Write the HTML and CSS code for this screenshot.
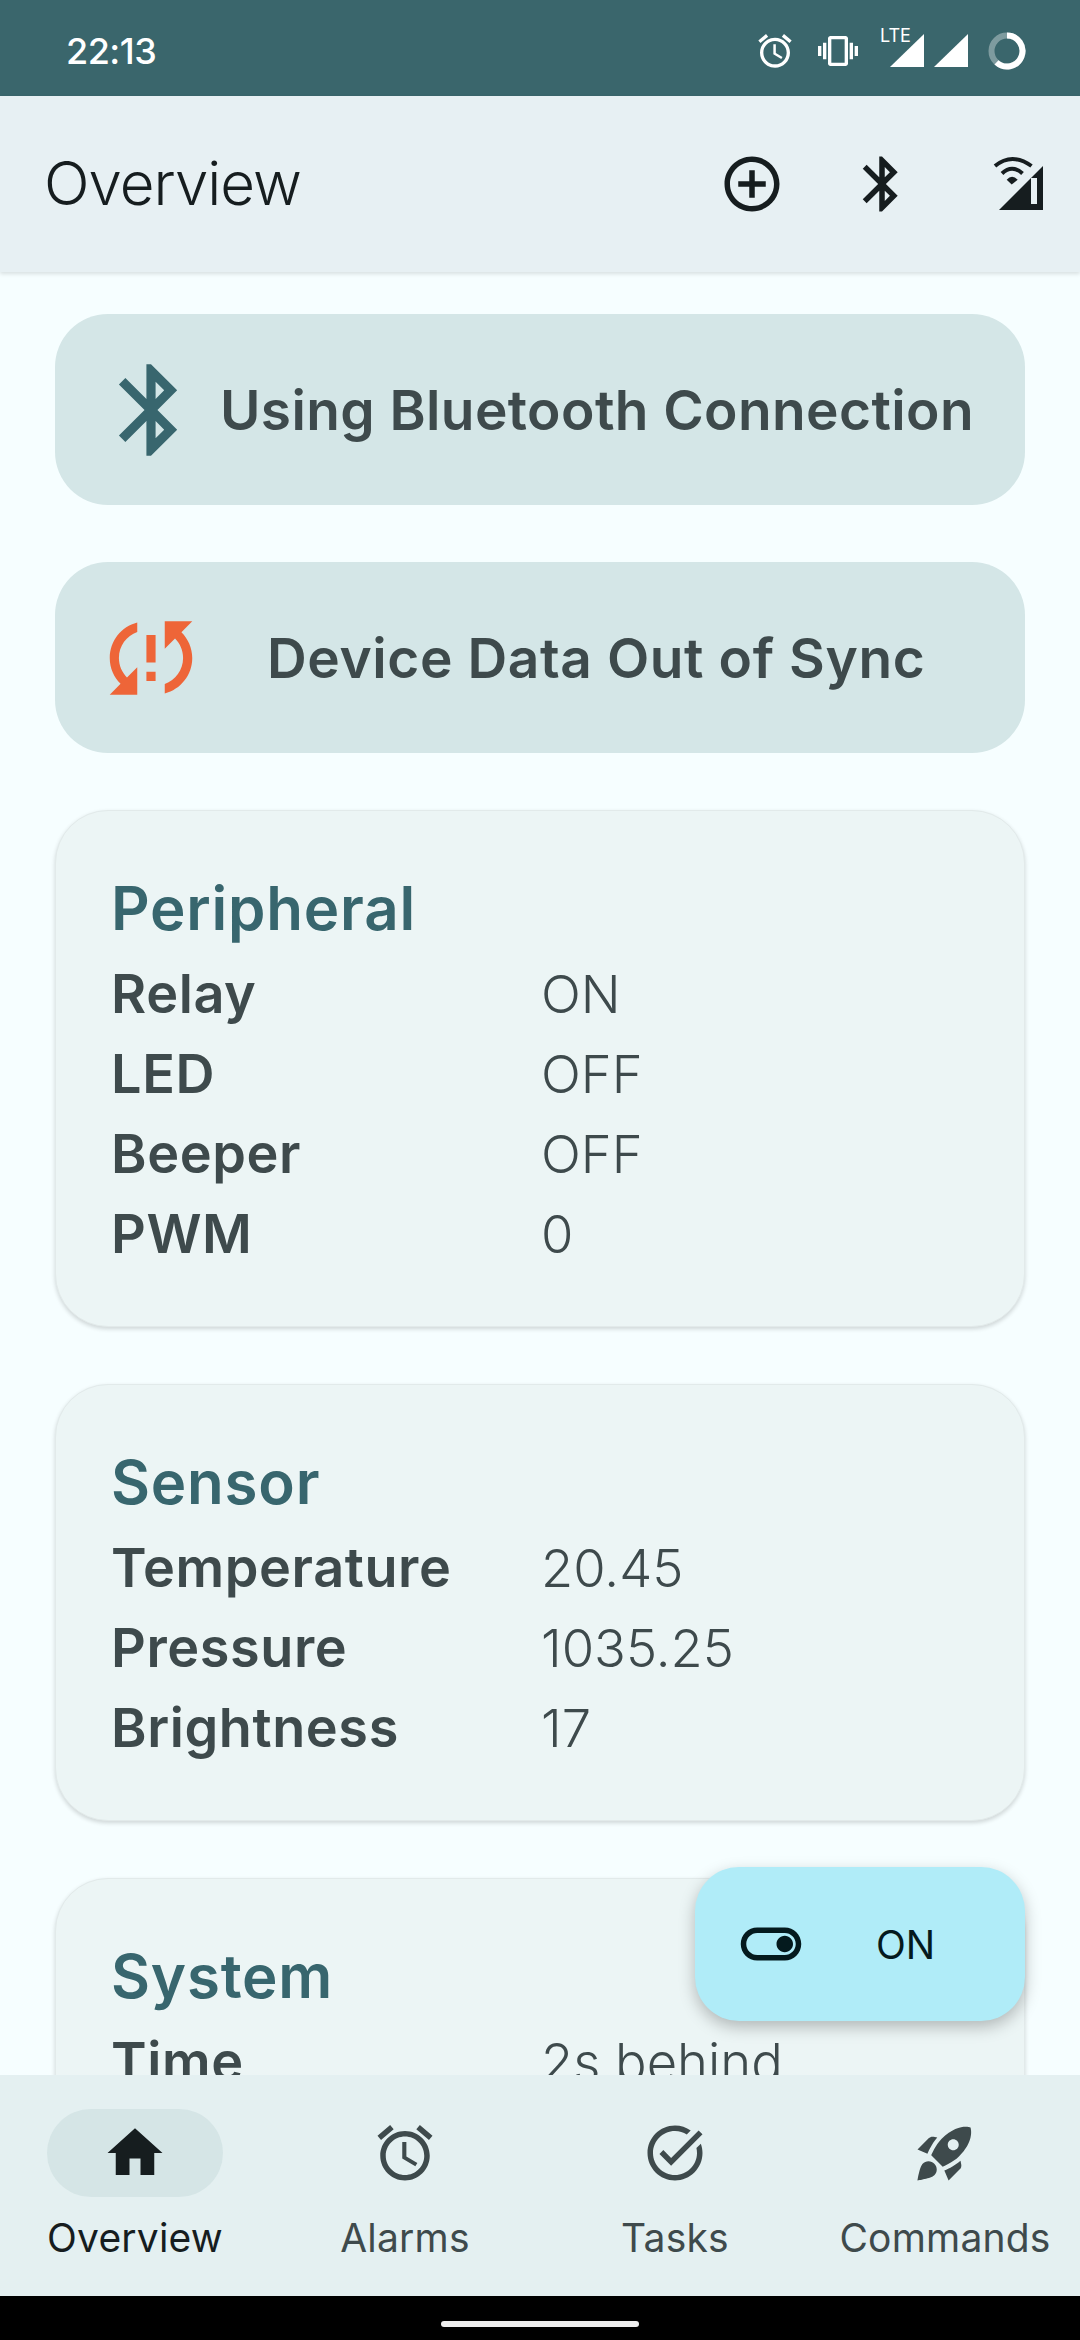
FILE: index.html

```html
<!DOCTYPE html>
<html lang="en">
<head>
    <meta charset="UTF-8">
    <meta name="viewport" content="width=device-width, initial-scale=1.0">
    <title>Overview</title>
    <link rel="stylesheet" href="styles.css">
</head>
<body>
    <div class="app">
        <div class="status-bar">
            <span class="clock">22:13</span>
            <div class="status-icons">
                <svg class="st-alarm" viewBox="0 0 24 24"><path d="M22 5.72l-4.6-3.86-1.29 1.53 4.6 3.86L22 5.72zM7.88 3.39L6.6 1.86 2 5.71l1.29 1.53 4.59-3.85zM12.5 8H11v6l4.75 2.85.75-1.23-4-2.37V8zM12 4c-4.97 0-9 4.03-9 9s4.03 9 9 9 9-4.03 9-9-4.03-9-9-9zm0 16c-3.87 0-7-3.13-7-7s3.13-7 7-7 7 3.13 7 7-3.13 7-7 7z"/></svg>
                <svg class="st-vibrate" viewBox="0 0 24 24"><path d="M0 15h2V9H0v6zm3 2h2V7H3v10zm19-8v6h2V9h-2zm-3 8h2V7h-2v10zM16.5 3h-9C6.67 3 6 3.67 6 4.5v15c0 .83.67 1.5 1.5 1.5h9c.83 0 1.5-.67 1.5-1.5v-15c0-.83-.67-1.5-1.5-1.5zM16 19H8V5h8v14z"/></svg>
                <div class="st-signal">
                    <span class="lte">LTE</span>
                    <svg class="st-tri" viewBox="0 0 34 33"><path d="M34 0v33H0z"/></svg>
                </div>
                <svg class="st-tri st-tri-2" viewBox="0 0 34 33"><path d="M34 0v33H0z"/></svg>
                <svg class="st-ring" viewBox="0 0 38 38">
                    <circle cx="19" cy="19" r="15.5" class="ring-dim"/>
                    <path d="M19 3.5A15.500 15.500 0 1 1 8.500 30.400" class="ring-on"/>
                </svg>
            </div>
        </div>

        <header class="app-bar">
            <h1>Overview</h1>
            <div class="bar-actions">
                <svg class="icon" viewBox="0 0 24 24"><path d="M13 7h-2v4H7v2h4v4h2v-4h4v-2h-4V7zm-1-5C6.48 2 2 6.48 2 12s4.48 10 10 10 10-4.48 10-10S17.520 2 12 2zm0 18c-4.410 0-8-3.590-8-8s3.590-8 8-8 8 3.590 8 8-3.590 8-8 8z"/></svg>
                <svg class="icon" viewBox="0 0 24 24"><path d="M17.71 7.71L12 2h-1v7.590L6.410 5 5 6.410 10.590 12 5 17.590 6.410 19 11 14.410V22h1l5.710-5.710-4.300-4.290 4.300-4.290zM13 5.830l1.880 1.880L13 9.590V5.830zm1.880 10.460L13 18.170v-3.760l1.880 1.880z"/></svg>
                <svg class="icon-net" viewBox="0 0 56 58">
                    <path d="M52 11v44H8z"/>
                    <path class="net-slot" d="M40 23h6v26h-6z"/>
                    <path class="net-arc" d="M4 11Q21-3 40.500 11"/>
                    <path class="net-arc" d="M11 18.500Q21 9 31.500 18.500"/>
                    <path d="M15.700 24.700Q21 19 26.700 24.700L20.700 29.500z"/>
                </svg>
            </div>
        </header>

        <main class="content">
            <div class="banner banner-bt">
                <svg class="banner-icon" viewBox="0 0 24 24"><path d="M17.71 7.71L12 2h-1v7.590L6.410 5 5 6.410 10.590 12 5 17.590 6.410 19 11 14.410V22h1l5.710-5.710-4.300-4.290 4.300-4.290zM13 5.830l1.880 1.880L13 9.590V5.830zm1.880 10.460L13 18.170v-3.760l1.880 1.880z"/></svg>
                <span>Using Bluetooth Connection</span>
            </div>
            <div class="banner banner-sync">
                <svg class="banner-icon" viewBox="0 0 24 24"><path d="M3 12c0 2.210.91 4.200 2.360 5.640L3 20h6v-6l-2.240 2.240C5.680 15.150 5 13.660 5 12c0-2.610 1.670-4.830 4-5.650V4.260C5.550 5.150 3 8.270 3 12zm8 5h2v-2h-2v2zM21 4h-6v6l2.240-2.240C18.320 8.850 19 10.340 19 12c0 2.610-1.670 4.830-4 5.650v2.090c3.450-.89 6-4.010 6-7.740 0-2.210-.91-4.200-2.360-5.640L21 4zm-10 9h2V7h-2v6z"/></svg>
                <span>Device Data Out of Sync</span>
            </div>

            <section class="card">
                <h2>Peripheral</h2>
                <div class="row"><b>Relay</b><span>ON</span></div>
                <div class="row"><b>LED</b><span>OFF</span></div>
                <div class="row"><b>Beeper</b><span>OFF</span></div>
                <div class="row"><b>PWM</b><span>0</span></div>
            </section>

            <section class="card">
                <h2>Sensor</h2>
                <div class="row"><b>Temperature</b><span>20.45</span></div>
                <div class="row"><b>Pressure</b><span>1035.25</span></div>
                <div class="row"><b>Brightness</b><span>17</span></div>
            </section>

            <section class="card">
                <h2>System</h2>
                <div class="row"><b>Time</b><span>2s behind</span></div>
            </section>

            <div class="fab">
                <svg class="fab-icon" viewBox="0 0 24 24"><path d="M17 6H7c-3.310 0-6 2.690-6 6s2.690 6 6 6h10c3.310 0 6-2.690 6-6s-2.690-6-6-6zm0 10H7c-2.210 0-4-1.790-4-4s1.790-4 4-4h10c2.210 0 4 1.790 4 4s-1.790 4-4 4zm0-7c-1.660 0-3 1.340-3 3s1.340 3 3 3 3-1.340 3-3-1.340-3-3-3z"/></svg>
                <span>ON</span>
            </div>
        </main>

        <nav class="bottom-nav">
            <div class="nav-item active">
                <div class="pill"><svg class="icon" viewBox="0 0 24 24"><path d="M10 20v-6h4v6h5v-8h3L12 3 2 12h3v8z"/></svg></div>
                <span>Overview</span>
            </div>
            <div class="nav-item">
                <div class="pill"><svg class="icon" viewBox="0 0 24 24"><path d="M22 5.720l-4.600-3.860-1.290 1.530 4.600 3.860L22 5.720zM7.880 3.390L6.600 1.860 2 5.710l1.290 1.530 4.590-3.850zM12.500 8H11v6l4.750 2.850.75-1.230-4-2.370V8zM12 4c-4.970 0-9 4.030-9 9s4.030 9 9 9 9-4.030 9-9-4.030-9-9-9zm0 16c-3.870 0-7-3.130-7-7s3.130-7 7-7 7 3.130 7 7-3.130 7-7 7z"/></svg></div>
                <span>Alarms</span>
            </div>
            <div class="nav-item">
                <div class="pill"><svg class="icon" viewBox="0 0 24 24"><path d="M22 5.180L10.590 16.600l-4.240-4.240 1.410-1.410 2.830 2.830 10-10L22 5.180zm-2.210 5.040c.13.570.21 1.170.21 1.780 0 4.420-3.580 8-8 8s-8-3.580-8-8 3.580-8 8-8c1.580 0 3.040.46 4.280 1.250l1.440-1.440C16.100 2.670 14.130 2 12 2 6.480 2 2 6.480 2 12s4.480 10 10 10 10-4.480 10-10c0-1.190-.22-2.330-.6-3.390l-1.610 1.610z"/></svg></div>
                <span>Tasks</span>
            </div>
            <div class="nav-item">
                <div class="pill"><svg class="icon" viewBox="0 0 24 24"><path d="M9.190 6.350c-2.040 2.290-3.440 5.580-3.570 5.890L2 10.690l4.050-4.050c.47-.47 1.150-.68 1.810-.55l1.330.26zM11.170 17s3.740-1.550 5.890-3.700c5.400-5.400 4.500-9.620 4.210-10.570-.95-.3-5.170-1.190-10.570 4.210C8.550 9.090 7 12.830 7 12.830L11.170 17zm6.480-2.190c-2.290 2.040-5.580 3.440-5.890 3.570L13.310 22l4.050-4.050c.47-.47.68-1.150.55-1.810l-.26-1.330zM9 18c0 .83-.34 1.580-.88 2.120C6.940 21.300 2 22 2 22s.7-4.940 1.880-6.120C4.420 15.340 5.170 15 6 15c1.660 0 3 1.340 3 3zm4-9c0-1.100.9-2 2-2s2 .9 2 2-.9 2-2 2-2-.9-2-2z"/></svg></div>
                <span>Commands</span>
            </div>
        </nav>

        <div class="gesture-bar"><div class="handle"></div></div>
    </div>
</body>
</html>
```

FILE: styles.css

```css
* {
    box-sizing: border-box;
}
body {
    margin: 0;
    font-family: Inter, "Noto Sans", sans-serif;
    background-color: #f6feff;
}
.app {
    width: 1080px;
    height: 2340px;
    display: flex;
    flex-direction: column;
    overflow: hidden;
}

/* status bar */
.status-bar {
    height: 96px;
    flex: none;
    background-color: #3a666c;
    color: white;
    display: flex;
    align-items: center;
    justify-content: space-between;
    padding: 5px 54px 0 66px;
}
.clock {
    font-size: 36px;
    font-weight: 500;
    letter-spacing: -0.5px;
}
.status-icons {
    display: flex;
    align-items: center;
    fill: white;
}
.st-alarm {
    width: 40px;
    height: 40px;
    margin-right: 23px;
}
.st-vibrate {
    width: 40px;
    height: 40px;
    margin-right: 32px;
}
.st-signal {
    position: relative;
    height: 33px;
    display: flex;
}
.st-tri {
    width: 34px;
    height: 33px;
}
.st-tri-2 {
    margin-left: 10px;
    margin-right: 20px;
}
.lte {
    position: absolute;
    left: -10px;
    top: -8px;
    font-size: 18px;
    font-weight: 400;
    line-height: 20px;
}
.st-ring {
    width: 38px;
    height: 38px;
    fill: none;
    stroke-width: 6;
}
.ring-dim {
    stroke: rgba(255, 255, 255, 0.35);
}
.ring-on {
    stroke: white;
}

/* app bar */
.app-bar {
    height: 176px;
    flex: none;
    background-color: #e7f0f3;
    display: flex;
    align-items: center;
    justify-content: space-between;
    padding: 0 33px 0 44px;
    box-shadow: 0 2px 4px rgba(0, 0, 0, 0.12);
    position: relative;
    z-index: 2;
}
.app-bar h1 {
    margin: 0 0 3px;
    font-size: 60px;
    font-weight: 300;
    color: #161d1f;
    letter-spacing: -1px;
}
.bar-actions {
    display: flex;
    align-items: center;
    gap: 64px;
    fill: #161d1f;
}
.icon {
    width: 66px;
    height: 66px;
}
.icon-net {
    width: 56px;
    height: 58px;
    margin-left: 12px;
}
.net-slot {
    fill: #e7f0f3;
}
.net-arc {
    fill: none;
    stroke: #161d1f;
    stroke-width: 4;
}

/* scroll area */
.content {
    flex: 1;
    min-height: 0;
    overflow: hidden;
    position: relative;
    padding: 42px 55px 0;
    display: flex;
    flex-direction: column;
    gap: 57px;
}
.banner {
    height: 191px;
    flex: none;
    background-color: #d4e6e7;
    border-radius: 53px;
    display: flex;
    align-items: center;
    padding-left: 41px;
    font-size: 55px;
    font-weight: 600;
    letter-spacing: 0.4px;
    color: #3e4a4c;
}
.banner-icon {
    width: 110px;
    height: 110px;
    flex: none;
}
.banner-bt {
    gap: 14px;
    fill: #38666e;
}
.banner-sync {
    gap: 61px;
    letter-spacing: 0.6px;
    fill: #ee6538;
}
.card {
    flex: none;
    background-color: #ecf5f5;
    border-radius: 53px;
    padding: 57px 55px 52px;
    border: 1px solid #e2eaea;
    box-shadow: 0 2px 4px rgba(0, 0, 0, 0.16);
}
.card h2 {
    margin: 0 0 6px;
    font-size: 60px;
    line-height: 80px;
    font-weight: 600;
    letter-spacing: 0.8px;
    color: #38666e;
}
.row {
    display: flex;
    height: 80px;
    line-height: 80px;
    font-size: 54px;
    color: #3e4a4c;
}
.row b {
    width: 430px;
    font-weight: 600;
    letter-spacing: 0.6px;
}
.row span {
    font-size: 52.500px;
    font-weight: 300;
}
.fab {
    position: absolute;
    left: 695px;
    top: 1595px;
    width: 330px;
    height: 154px;
    background-color: #b0ecf8;
    border-radius: 44px;
    box-shadow: 0 6px 16px rgba(0, 0, 0, 0.25);
    display: flex;
    align-items: center;
    padding-left: 43px;
    gap: 72px;
    font-size: 39px;
    font-weight: 400;
    color: #041a1e;
    fill: #041a1e;
}
.fab-icon {
    width: 66px;
    height: 66px;
}

/* bottom navigation */
.bottom-nav {
    height: 221px;
    flex: none;
    background-color: #e4f0f1;
    display: grid;
    grid-template-columns: repeat(4, 1fr);
    padding-top: 34px;
    position: relative;
    z-index: 2;
}
.nav-item {
    display: flex;
    flex-direction: column;
    align-items: center;
    font-size: 39px;
    letter-spacing: 0.2px;
    color: #3e4a4c;
    fill: #3e4a4c;
    gap: 17px;
    white-space: nowrap;
}
.pill {
    width: 176px;
    height: 88px;
    border-radius: 44px;
    display: flex;
    align-items: center;
    justify-content: center;
}
.nav-item.active {
    color: #161d1f;
    fill: #161d1f;
}
.nav-item.active .pill {
    background-color: #d5e5e6;
}

.gesture-bar {
    height: 44px;
    flex: none;
    background-color: black;
    display: flex;
    justify-content: center;
    padding-top: 25px;
}
.handle {
    width: 198px;
    height: 6px;
    border-radius: 3px;
    background-color: #eeeeee;
}
```
